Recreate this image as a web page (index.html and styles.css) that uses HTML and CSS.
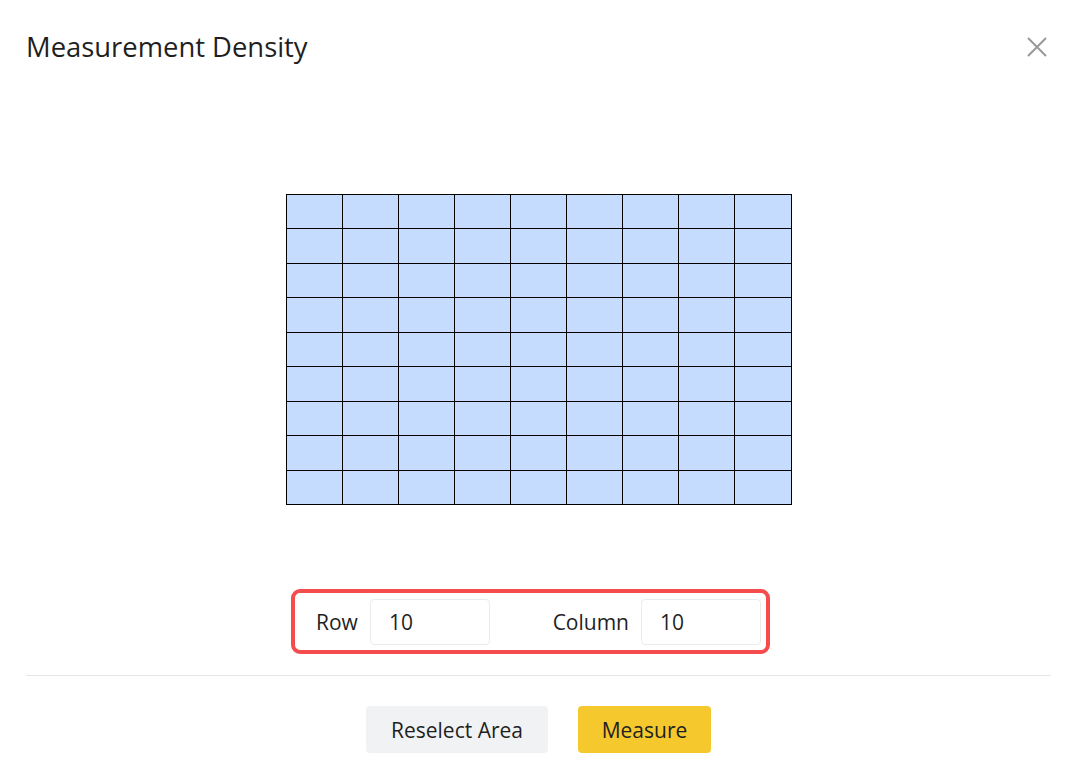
FILE: index.html
```html
<!DOCTYPE html>
<html lang="en">
<head>
<meta charset="utf-8">
<title>Measurement Density</title>
<link rel="stylesheet" href="styles.css">
</head>
<body>
<div class="dialog">
  <header class="dialog-header">
    <h1 class="dialog-title">Measurement Density</h1>
    <button class="close-btn" aria-label="Close">
      <svg width="20" height="20" viewBox="0 0 20 20"><path d="M1 1L19 19M19 1L1 19" stroke="#999" stroke-width="2" fill="none"/></svg>
    </button>
  </header>

  <main class="dialog-body">
    <div class="density-grid">
      <div></div><div></div><div></div><div></div><div></div><div></div><div></div><div></div><div></div>
      <div></div><div></div><div></div><div></div><div></div><div></div><div></div><div></div><div></div>
      <div></div><div></div><div></div><div></div><div></div><div></div><div></div><div></div><div></div>
      <div></div><div></div><div></div><div></div><div></div><div></div><div></div><div></div><div></div>
      <div></div><div></div><div></div><div></div><div></div><div></div><div></div><div></div><div></div>
      <div></div><div></div><div></div><div></div><div></div><div></div><div></div><div></div><div></div>
      <div></div><div></div><div></div><div></div><div></div><div></div><div></div><div></div><div></div>
      <div></div><div></div><div></div><div></div><div></div><div></div><div></div><div></div><div></div>
      <div></div><div></div><div></div><div></div><div></div><div></div><div></div><div></div><div></div>
    </div>

    <div class="density-fields">
      <label class="field">
        <span class="field-label">Row</span>
        <input class="field-input" type="text" value="10">
      </label>
      <label class="field">
        <span class="field-label">Column</span>
        <input class="field-input" type="text" value="10">
      </label>
    </div>
  </main>

  <footer class="dialog-footer">
    <button class="btn btn-secondary">Reselect Area</button>
    <button class="btn btn-primary">Measure</button>
  </footer>
</div>
</body>
</html>
```

FILE: styles.css
```css
* {
  box-sizing: border-box;
}

html, body {
  margin: 0;
  padding: 0;
  background: #ffffff;
}

body {
  font-family: "Open Sans", "Noto Sans", sans-serif;
  color: #1f1f1f;
}

.dialog {
  width: 1078px;
  height: 782px;
  padding: 0 27px 0 26px;
  display: flex;
  flex-direction: column;
}

.dialog-header {
  height: 94px;
  display: flex;
  align-items: center;
  justify-content: space-between;
}

.dialog-title {
  margin: 0;
  font-size: 27.4px;
  font-weight: 400;
  line-height: 34px;
  color: #1f1f1f;
}

.close-btn {
  border: 0;
  background: transparent;
  padding: 0;
  width: 20px;
  height: 20px;
  margin-right: 4px;
  display: flex;
  cursor: pointer;
}

.dialog-body {
  display: flex;
  flex-direction: column;
  align-items: center;
  border-bottom: 1px solid #e5e5e5;
}

/* 9 x 9 sampling grid; the black backdrop shows through the 1px gaps as cell lines */
.density-grid {
  margin-top: 100px;
  width: 506px;
  height: 311px;
  display: grid;
  grid-template-columns: repeat(8, 55px) 56px;
  grid-template-rows: repeat(9, 1fr);
  gap: 1px;
  padding: 1px;
  background: #000000;
}

.density-grid > div {
  background: #c5dcff;
}

.density-fields {
  margin-top: 84px;
  margin-bottom: 21px;
  margin-right: 16px;
  width: 479px;
  height: 65px;
  border: 4px solid #f54d4d;
  border-radius: 9px;
  display: flex;
  align-items: center;
  justify-content: space-between;
  padding: 0 5px 0 21px;
}

.field {
  display: flex;
  align-items: center;
  gap: 12px;
}

.field-label {
  font-size: 21px;
  color: #1f1f1f;
}

.field-input {
  width: 120px;
  height: 46px;
  border: 1px solid #ebebeb;
  border-radius: 4px;
  padding: 0 18px;
  font-family: inherit;
  font-size: 21px;
  color: #1f1f1f;
  outline: none;
}

.dialog-footer {
  padding-top: 30px;
  display: flex;
  justify-content: center;
  gap: 30px;
}

.btn {
  height: 47px;
  border: 0;
  border-radius: 4px;
  font-family: inherit;
  font-size: 21px;
  color: #1f1f1f;
  cursor: pointer;
}

.btn-secondary {
  width: 182px;
  background: #f1f2f4;
}

.btn-primary {
  width: 133px;
  background: #f5c92e;
}
```
